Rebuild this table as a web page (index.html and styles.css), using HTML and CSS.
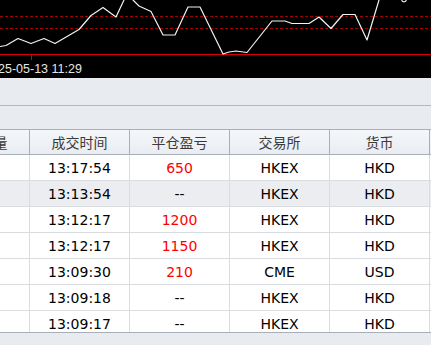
FILE: index.html
```html
<!DOCTYPE html>
<html>
<head>
<meta charset="utf-8">
<link rel="stylesheet" href="styles.css">
</head>
<body>
<div class="chart">
  <svg class="chart-svg" width="431" height="78" viewBox="0 0 431 78">
    <line x1="0" y1="16.5" x2="431" y2="16.5" class="dash"/>
    <line x1="0" y1="28.5" x2="431" y2="28.5" class="dash"/>
    <line x1="0" y1="54.5" x2="431" y2="54.5" class="base"/>
    <line x1="31.5" y1="54" x2="31.5" y2="60" class="base"/>
    <polyline class="price" points="0,46.5 6,45.5 18,38.5 31,43.5 44,38.5 55,43.5 67,36.5 79,29.5 91,15.5 103,7.5 116,17 124,0 128,-8 133,0 139,6 151,11.5 163,35 175,35 188,7 200,7 223,54 229,52 236,51 247,52.5 272,21 285,21 292,23.5 309,23.5 319,17 331,28.5 343,14.5 355,14.5 367,40 379,0 381,-6"/>
    <circle cx="404" cy="-0.5" r="2.3" class="marker"/>
    <text x="-2" y="72.5" class="stamp">25-05-13 11:29</text>
  </svg>
</div>
<div class="toolbar"></div>
<div class="subbar"></div>
<div class="grid">
  <div class="grid-inner">
    <div class="row head">
      <div class="cell">成交数量</div>
      <div class="cell">成交时间</div>
      <div class="cell">平仓盈亏</div>
      <div class="cell">交易所</div>
      <div class="cell">货币</div>
      <div class="cell"></div>
    </div>
    <div class="row">
      <div class="cell"></div>
      <div class="cell">13:17:54</div>
      <div class="cell red">650</div>
      <div class="cell">HKEX</div>
      <div class="cell">HKD</div>
      <div class="cell"></div>
    </div>
    <div class="row alt">
      <div class="cell"></div>
      <div class="cell">13:13:54</div>
      <div class="cell">--</div>
      <div class="cell">HKEX</div>
      <div class="cell">HKD</div>
      <div class="cell"></div>
    </div>
    <div class="row">
      <div class="cell"></div>
      <div class="cell">13:12:17</div>
      <div class="cell red">1200</div>
      <div class="cell">HKEX</div>
      <div class="cell">HKD</div>
      <div class="cell"></div>
    </div>
    <div class="row">
      <div class="cell"></div>
      <div class="cell">13:12:17</div>
      <div class="cell red">1150</div>
      <div class="cell">HKEX</div>
      <div class="cell">HKD</div>
      <div class="cell"></div>
    </div>
    <div class="row">
      <div class="cell"></div>
      <div class="cell">13:09:30</div>
      <div class="cell red">210</div>
      <div class="cell">CME</div>
      <div class="cell">USD</div>
      <div class="cell"></div>
    </div>
    <div class="row">
      <div class="cell"></div>
      <div class="cell">13:09:18</div>
      <div class="cell">--</div>
      <div class="cell">HKEX</div>
      <div class="cell">HKD</div>
      <div class="cell"></div>
    </div>
    <div class="row">
      <div class="cell"></div>
      <div class="cell">13:09:17</div>
      <div class="cell">--</div>
      <div class="cell">HKEX</div>
      <div class="cell">HKD</div>
      <div class="cell"></div>
    </div>
  </div>
</div>
</body>
</html>
```
FILE: styles.css
```css
html, body {
  margin: 0;
  padding: 0;
}
body {
  width: 431px;
  height: 345px;
  overflow: hidden;
  background: #e8ebf0;
  font-family: "DejaVu Sans", "Noto Sans CJK SC", sans-serif;
}
.chart {
  height: 78px;
  background: #000;
  overflow: hidden;
}
.chart-svg {
  display: block;
  overflow: hidden;
}
.dash {
  stroke: #a00000;
  stroke-width: 1;
  stroke-dasharray: 3 2;
}
.base {
  stroke: #d80000;
  stroke-width: 1;
}
.price {
  fill: none;
  stroke: #f2f2f2;
  stroke-width: 1.2;
  stroke-linejoin: round;
}
.marker {
  fill: none;
  stroke: #f2f2f2;
  stroke-width: 1.2;
}
.stamp {
  fill: #e6e6e6;
  font-family: "Liberation Sans", Arial, sans-serif;
  font-size: 12.5px;
}
.toolbar {
  height: 27px;
  background: #e8ebf0;
  border-bottom: 1px solid #b2b7bf;
}
.subbar {
  height: 23px;
  background: #e8ebf0;
}
.grid {
  height: 202px;
  overflow: hidden;
  border-top: 1px solid #a9afb8;
  border-bottom: 1px solid #a9afb8;
  background: #fff;
}
.grid-inner {
  margin-left: -70px;
}
.row {
  display: grid;
  grid-template-columns: 100px 100px 100px 100px 100px 100px;
  height: 26px;
  box-sizing: border-box;
  border-bottom: 1px solid #d9dce1;
  background: #fff;
}
.row.alt {
  background: #ebedf0;
}
.row.head {
  height: 25px;
  background: linear-gradient(#f5f7fa, #e9ecf1);
  border-bottom: 1px solid #a9afb8;
}
.cell {
  border-right: 1px solid #d9dce1;
  display: flex;
  align-items: center;
  justify-content: center;
  font-size: 14px;
  color: #000;
  white-space: nowrap;
  overflow: visible;
  padding-top: 1px;
}
.head .cell {
  border-right-color: #a9afb8;
  font-family: "Noto Sans CJK SC", sans-serif;
  font-size: 14px;
  color: #3a3a3a;
  padding-top: 0;
}
.red {
  color: #ff0000;
}
```
